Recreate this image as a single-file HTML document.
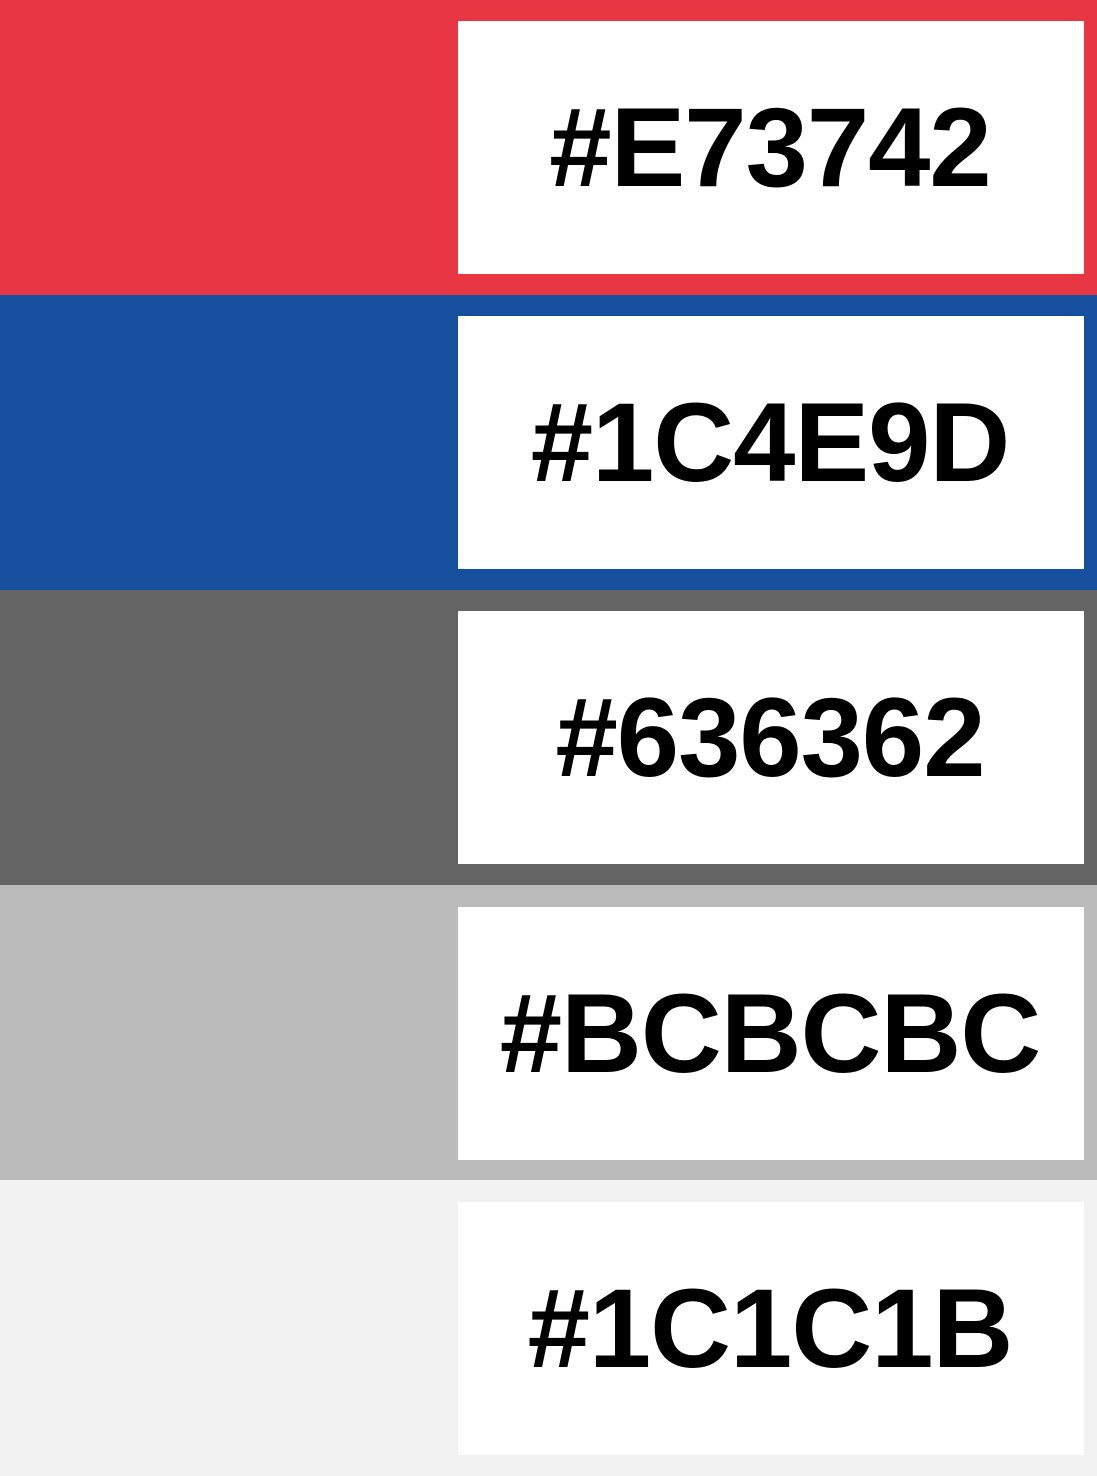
<!DOCTYPE html>
<html><head><meta charset="utf-8"><style>
html,body{margin:0;padding:0;width:1097px;height:1476px;overflow:hidden}
.band{position:absolute;left:0;width:1097px}
.box{position:absolute;left:458px;width:626px;height:253px;background:#fff;display:flex;align-items:center;justify-content:center;font-family:"Liberation Sans",Arial,sans-serif;font-weight:bold;font-size:112px;letter-spacing:-1px;color:#000;line-height:1}
.box span{position:relative;top:0px;left:-1px}
</style></head><body>
<div class="band" style="top:0;height:295px;background:#E83743"></div>
<div class="band" style="top:295px;height:295px;background:#154F9E"></div>
<div class="band" style="top:590px;height:295px;background:#646464"></div>
<div class="band" style="top:885px;height:295px;background:#BBBBBB"></div>
<div class="band" style="top:1180px;height:296px;background:#F2F2F2"></div>
<div class="box" style="top:21px"><span>#E73742</span></div>
<div class="box" style="top:316px"><span>#1C4E9D</span></div>
<div class="box" style="top:611px"><span>#636362</span></div>
<div class="box" style="top:907px"><span>#BCBCBC</span></div>
<div class="box" style="top:1202px"><span>#1C1C1B</span></div>
</body></html>
